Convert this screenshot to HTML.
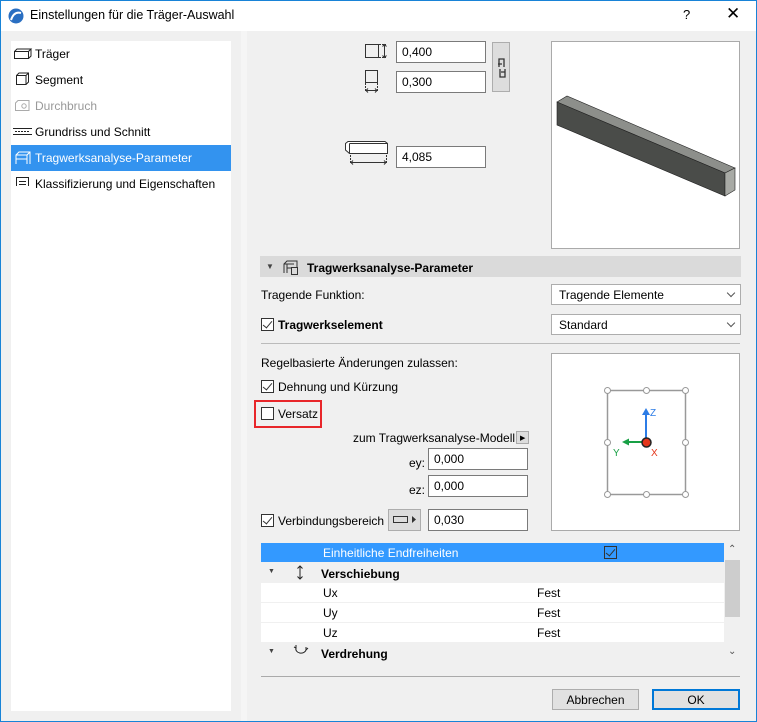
<!DOCTYPE html>
<html><head><meta charset="utf-8"><style>
*{box-sizing:border-box;margin:0;padding:0}
body{width:757px;height:722px;position:relative;background:#f0f0f0;font-family:"Liberation Sans",sans-serif;font-size:12px;color:#000;overflow:hidden}
.a{position:absolute}
.frame{left:0;top:0;width:757px;height:722px;border:1px solid #1883d7}
.title{left:1px;top:1px;width:755px;height:30px;background:#fff}
.inp{position:absolute;background:#fff;border:1px solid #7a7a7a;height:22px;padding:3px 0 0 5px;font-size:12px}
.sel{position:absolute;background:#fff;border:1px solid #adadad;height:21px;padding:3px 0 0 7px}
.sel:after{content:"";position:absolute;right:6px;top:5px;width:5px;height:5px;border-right:1px solid #555;border-bottom:1px solid #555;transform:rotate(45deg)}
.cb{position:absolute;width:13px;height:13px;border:1px solid #333;background:#fff}
.cb.c:after{content:"";position:absolute;left:3px;top:0px;width:4px;height:8px;border-right:1.5px solid #333;border-bottom:1.5px solid #333;transform:rotate(40deg)}
.li{position:absolute;left:11px;width:220px;height:26px;padding:6px 0 0 24px}
.row{position:absolute;left:261px;width:463px;height:19px;background:#fff;padding-top:3px}
.btn{position:absolute;height:21px;border:1px solid #adadad;background:#e1e1e1;text-align:center;padding-top:3px}
</style></head><body>
<div class="a frame"></div>
<div class="a title"></div>
<svg class="a" style="left:8px;top:8px" width="16" height="16"><circle cx="8" cy="8" r="7.5" fill="#2a6fc2"/><path d="M3 12 Q6 3 13 5" stroke="#fff" stroke-width="2" fill="none"/></svg>
<div class="a" style="left:30px;top:8px;font-size:12.5px">Einstellungen für die Träger-Auswahl</div>
<div class="a" style="left:683px;top:7px;font-size:13px">?</div>
<div class="a" style="left:726px;top:4px;font-size:17px">✕</div>

<div class="a" style="left:11px;top:41px;width:220px;height:670px;background:#fff"></div>
<div class="a" style="left:241px;top:31px;width:6px;height:690px;background:#f5f5f5"></div>
<div class="li" style="top:41px">Träger</div>
<div class="li" style="top:67px">Segment</div>
<div class="li" style="top:93px;color:#999">Durchbruch</div>
<div class="li" style="top:119px">Grundriss und Schnitt</div>
<div class="li" style="top:145px;background:#3393ef;color:#fff">Tragwerksanalyse-Parameter</div>
<div class="li" style="top:171px">Klassifizierung und Eigenschaften</div>
<svg class="a" style="left:13px;top:46px" width="20" height="140" fill="none" stroke="#222">
<rect x="1.5" y="5.5" width="14" height="7"/><path d="M1.5 5.5 L4 3 H18 L15.5 5.5 M15.5 12.5 L18 10 V3"/>
<path d="M3.5 29.5 L6 27 H15.5 V36 L13 38.5 H3.5 Z M3.5 29.5 H13 V38.5 M13 29.5 L15.5 27"/>
<g stroke="#aaa"><path d="M2.5 57 L5 54.5 H16 V64.5 H2.5 Z"/><circle cx="11" cy="60" r="2.2"/></g>
<path d="M0 82.5 H19 M0 88.5 H19" /><path d="M2 85.5 H17" stroke-dasharray="2 1"/>
<g stroke="#fff"><path d="M3 118 V109 L6 106 H17 V118 M3 109 H14 V118 M14 109 L17 106 M3 113 H14"/></g>
<rect x="3.5" y="131.5" width="12" height="14"/><path d="M6 135.5H13M6 138.5H13M6 141.5H13"/>
</svg>

<!-- dimension icons -->
<svg class="a" style="left:362px;top:40px" width="32" height="60" fill="none" stroke="#333">
<rect x="3.5" y="4.5" width="13" height="13"/><path d="M17 4.5H24M17 17.5H24" stroke-dasharray="2 1"/><path d="M22.5 5V17M20.5 6.5L22.5 4.5 24.5 6.5M20.5 15.5 22.5 17.5 24.5 15.5"/>
<rect x="3.5" y="30.5" width="12" height="12"/><path d="M3.5 43V52M15.5 43V52" stroke-dasharray="2 1"/><path d="M4 50.5H15M6 48.5 4 50.5 6 52.5M13 48.5 15 50.5 13 52.5"/>
</svg>
<svg class="a" style="left:344px;top:140px" width="50" height="30" fill="none" stroke="#333">
<path d="M1.5 3.5 L4 1.5 H41 L43.5 3.5 V13.5 H5.5 L1.5 10 Z M5.5 3.5 H43.5 M5.5 3.5 V13.5" fill="#fff"/>
<path d="M6.5 15V24M42.5 15V24" stroke-dasharray="2 1"/><path d="M7 22.5H42M9 20.5 7 22.5 9 24.5M40 20.5 42 22.5 40 24.5"/>
</svg>
<div class="inp" style="left:396px;top:41px;width:90px">0,400</div>
<div class="inp" style="left:396px;top:71px;width:90px">0,300</div>
<div class="a" style="left:492px;top:42px;width:18px;height:50px;background:#ddd;border:1px solid #adadad"></div>
<svg class="a" style="left:495px;top:56px" width="12" height="24" fill="none" stroke="#333" stroke-width="1.3"><path d="M4 11 V3 H9 V11 M3 8 H7 M5 13 V21 H10 V13 M6 16 H10"/></svg>
<div class="inp" style="left:396px;top:146px;width:90px">4,085</div>

<div class="a" style="left:551px;top:41px;width:189px;height:208px;background:#fff;border:1px solid #aaa"></div>
<svg class="a" style="left:551px;top:41px" width="189" height="208">
<polygon points="6,61 16,55 184,127 174,132" fill="#8d8f8b" stroke="#222" stroke-width="0.6"/>
<polygon points="6,61 174,132 174,155 6,84" fill="#4a4c49" stroke="#222" stroke-width="0.6"/>
<polygon points="174,132 184,127 184,149 174,155" fill="#a8aaa5" stroke="#222" stroke-width="0.6"/>
</svg>

<div class="a" style="left:260px;top:256px;width:481px;height:21px;background:#dadada"></div>
<div class="a" style="left:266px;top:262px;font-size:8px;color:#444">▼</div>
<svg class="a" style="left:282px;top:259px" width="18" height="16" fill="none" stroke="#333"><path d="M2 14V5L5 2H15V8M2 5H12M5 5V14M5 9H9"/><rect x="9.5" y="8.5" width="6" height="7"/></svg>
<div class="a" style="left:307px;top:261px;font-weight:bold">Tragwerksanalyse-Parameter</div>

<div class="a" style="left:261px;top:288px">Tragende Funktion:</div>
<div class="sel" style="left:551px;top:284px;width:190px">Tragende Elemente</div>
<div class="cb c" style="left:261px;top:318px"></div>
<div class="a" style="left:278px;top:318px;font-weight:bold">Tragwerkselement</div>
<div class="sel" style="left:551px;top:314px;width:190px">Standard</div>
<div class="a" style="left:261px;top:343px;width:479px;height:1px;background:#bbb"></div>

<div class="a" style="left:261px;top:356px">Regelbasierte Änderungen zulassen:</div>
<div class="cb c" style="left:261px;top:380px"></div>
<div class="a" style="left:278px;top:380px">Dehnung und Kürzung</div>
<div class="a" style="left:254px;top:400px;width:68px;height:28px;border:2px solid #e8262a"></div>
<div class="cb" style="left:261px;top:407px"></div>
<div class="a" style="left:278px;top:407px">Versatz</div>
<div class="a" style="left:353px;top:431px">zum Tragwerksanalyse-Modell</div>
<div class="a" style="left:516px;top:431px;width:13px;height:13px;background:#ddd;border:1px solid #aaa;font-size:7px;padding:2px 0 0 3px">▶</div>
<div class="a" style="left:409px;top:456px">ey:</div>
<div class="inp" style="left:428px;top:448px;width:100px">0,000</div>
<div class="a" style="left:409px;top:483px">ez:</div>
<div class="inp" style="left:428px;top:475px;width:100px">0,000</div>
<div class="cb c" style="left:261px;top:514px"></div>
<div class="a" style="left:278px;top:514px">Verbindungsbereich</div>
<div class="a" style="left:388px;top:509px;width:33px;height:22px;background:#ddd;border:1px solid #adadad"></div>
<svg class="a" style="left:392px;top:514px" width="26" height="12"><rect x="1.5" y="2.5" width="14" height="6" fill="none" stroke="#333"/><path d="M20 2L24 5.5 20 9Z" fill="#333"/></svg>
<div class="inp" style="left:428px;top:509px;width:100px">0,030</div>

<div class="a" style="left:551px;top:353px;width:189px;height:178px;background:#fff;border:1px solid #aaa"></div>
<svg class="a" style="left:551px;top:353px" width="189" height="178">
<rect x="56.5" y="37.5" width="78" height="104" fill="none" stroke="#999" stroke-width="1.5"/>
<g fill="#fff" stroke="#999"><circle cx="56.5" cy="37.5" r="3"/><circle cx="95.5" cy="37.5" r="3"/><circle cx="134.5" cy="37.5" r="3"/><circle cx="56.5" cy="89.5" r="3"/><circle cx="134.5" cy="89.5" r="3"/><circle cx="56.5" cy="141.5" r="3"/><circle cx="95.5" cy="141.5" r="3"/><circle cx="134.5" cy="141.5" r="3"/></g>
<path d="M95 87V60" stroke="#2c7ce6" stroke-width="2"/><path d="M91 62L95 55 99 62Z" fill="#2c7ce6"/>
<path d="M93 89H76" stroke="#18a045" stroke-width="2"/><path d="M78 85.5 71 89 78 92.5Z" fill="#18a045"/>
<circle cx="95.5" cy="89.5" r="4.5" fill="#e4361b" stroke="#222" stroke-width="1.5"/>
<text x="99" y="63" font-size="10" fill="#2c7ce6" font-family="Liberation Sans">Z</text>
<text x="62" y="103" font-size="10" fill="#18a045" font-family="Liberation Sans">Y</text>
<text x="100" y="103" font-size="10" fill="#e4361b" font-family="Liberation Sans">X</text>
</svg>

<div class="a" style="left:261px;top:543px;width:463px;height:19px;background:#3399ff"></div>
<div class="a" style="left:323px;top:546px;color:#fff">Einheitliche Endfreiheiten</div>
<div class="cb c" style="left:604px;top:546px;background:#3399ff"></div>
<div class="a" style="left:261px;top:562px;width:463px;height:21px;background:#f0f0f0"></div>
<div class="a" style="left:268px;top:568px;font-size:7px;color:#444">▼</div>
<svg class="a" style="left:296px;top:565px" width="8" height="15" fill="none" stroke="#222"><path d="M4 1V14M1.5 3.5 4 1 6.5 3.5M1.5 11.5 4 14 6.5 11.5"/></svg>
<div class="a" style="left:321px;top:567px;font-weight:bold">Verschiebung</div>
<div class="row" style="top:583px"><span style="position:absolute;left:62px">Ux</span><span style="position:absolute;left:276px">Fest</span></div>
<div class="row" style="top:603px"><span style="position:absolute;left:62px">Uy</span><span style="position:absolute;left:276px">Fest</span></div>
<div class="row" style="top:623px"><span style="position:absolute;left:62px">Uz</span><span style="position:absolute;left:276px">Fest</span></div>
<div class="a" style="left:268px;top:648px;font-size:7px;color:#444">▼</div>
<svg class="a" style="left:293px;top:645px" width="16" height="12" fill="none" stroke="#222"><path d="M3 3 A5 4 0 0 0 13 5 M1 2 L3 3 3 0 M13 5 L13 2 M13 5 L15 3"/></svg>
<div class="a" style="left:321px;top:647px;font-weight:bold">Verdrehung</div>
<div class="a" style="left:725px;top:560px;width:15px;height:57px;background:#cdcdcd"></div>
<div class="a" style="left:728px;top:544px;font-size:10px;color:#555">⌃</div>
<div class="a" style="left:728px;top:646px;font-size:10px;color:#555">⌄</div>
<div class="a" style="left:261px;top:676px;width:479px;height:1px;background:#aaa"></div>

<div class="btn" style="left:552px;top:689px;width:87px">Abbrechen</div>
<div class="btn" style="left:652px;top:689px;width:88px;border:2px solid #0078d7;padding-top:2px">OK</div>
</body></html>
